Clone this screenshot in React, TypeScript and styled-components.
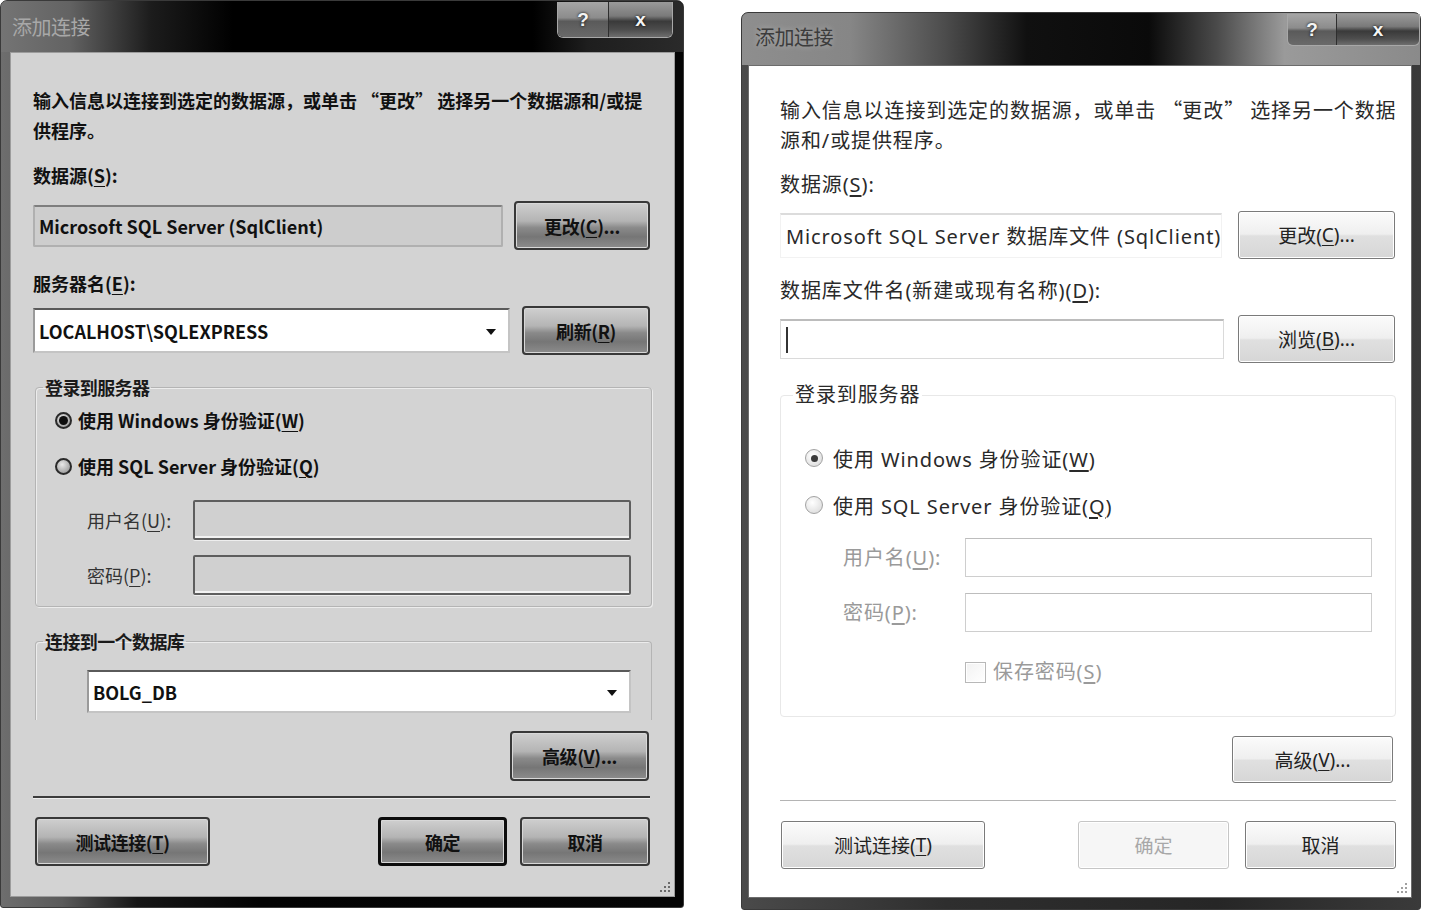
import React from "react";
import styled, { createGlobalStyle, css } from "styled-components";

type Tone = "dark" | "light";

const GlobalStyle = createGlobalStyle`
  html, body {
    margin: 0;
    padding: 0;
    background: #ffffff;
  }
  body {
    font-family: "Noto Sans CJK SC", "Noto Sans", sans-serif;
  }
`;

const darkFont = css`
  font-family: "Noto Sans CJK SC", sans-serif;
  font-weight: 700;
  font-size: 18px;
  letter-spacing: 0;
  color: #111;
`;

const lightFont = css`
  font-family: "Noto Sans", "Noto Sans CJK SC", sans-serif;
  font-weight: 400;
  font-size: 20px;
  letter-spacing: 0.9px;
  color: #2a2a2a;
`;

const Page = styled.div`
  width: 1435px;
  height: 911px;
  display: flex;
  align-items: flex-start;
  gap: 57px;
  overflow: hidden;
`;

const Window = styled.div<{ $tone: Tone }>`
  box-sizing: border-box;
  display: flex;
  flex-direction: column;
  flex: none;
  border: 1px solid #3a3a3a;
  border-radius: 7px 7px 3px 3px;
  ${(p) =>
    p.$tone === "dark"
      ? css`
          width: 684px;
          height: 908px;
          background: linear-gradient(
            90deg,
            #6e6e6e 0%,
            #5a5a5a 9%,
            #161616 20%,
            #030303 38%,
            #050505 100%
          );
        `
      : css`
          width: 680px;
          height: 898px;
          margin-top: 12px;
          background: linear-gradient(90deg, #4a4a4a 0%, #2e2e2e 30%, #262626 70%, #3a3a3a 100%);
        `}
`;

const TitleBar = styled.div<{ $tone: Tone }>`
  display: flex;
  align-items: flex-start;
  justify-content: space-between;
  flex: none;
  border-radius: 6px 6px 0 0;
  ${(p) =>
    p.$tone === "dark"
      ? css`
          height: 51px;
          padding: 0 10px 0 11px;
          background: linear-gradient(
            90deg,
            #747474 0%,
            #636363 10%,
            #1c1c1c 22%,
            #000 34%,
            #000 78%,
            #1e1e1e 86%,
            #2a2a2a 100%
          );
        `
      : css`
          height: 52px;
          padding: 0 0 0 13px;
          background: linear-gradient(
            90deg,
            #8e8e8e 0%,
            #868686 16%,
            #4c4c4c 30%,
            #101010 42%,
            #0a0a0a 60%,
            #4a4a4a 70%,
            #9a9a9a 80%,
            #8a8a8a 100%
          );
        `}
`;

const TitleText = styled.div<{ $tone: Tone }>`
  font-family: "Noto Sans CJK SC", sans-serif;
  font-size: 20px;
  line-height: 26px;
  letter-spacing: -0.5px;
  ${(p) =>
    p.$tone === "dark"
      ? css`
          margin-top: 13px;
          color: #a8a8a8;
        `
      : css`
          margin-top: 11px;
          color: #3c3c3c;
          text-shadow: 0 0 6px rgba(255, 255, 255, 0.35);
        `}
`;

const CaptionGroup = styled.div<{ $tone: Tone }>`
  display: flex;
  margin-top: 1px;
  border: 1px solid #a8a8a8;
  border-top: none;
  border-radius: 0 0 6px 6px;
  overflow: hidden;
  height: ${(p) => (p.$tone === "dark" ? 35 : 31)}px;
`;

const CaptionButton = styled.div<{ $w: number; $close?: boolean }>`
  width: ${(p) => p.$w}px;
  display: flex;
  align-items: center;
  justify-content: center;
  font-family: "Liberation Sans", "DejaVu Sans", sans-serif;
  font-weight: 700;
  font-size: 19px;
  color: #f4f4f4;
  text-shadow: 0 0 3px #000;
  background: ${(p) =>
    p.$close
      ? "linear-gradient(180deg, #9a9a9a 0%, #7a7a7a 40%, #3a3a3a 55%, #4e4e4e 80%, #6e6e6e 100%)"
      : "linear-gradient(180deg, #a6a6a6 0%, #8c8c8c 45%, #5a5a5a 55%, #6a6a6a 100%)"};
  & + & {
    border-left: 1px solid #2e2e2e;
  }
`;

const Client = styled.div<{ $tone: Tone }>`
  position: relative;
  flex: 1;
  display: flex;
  flex-direction: column;
  box-sizing: border-box;
  ${(p) =>
    p.$tone === "dark"
      ? css`
          margin: 0 8px 10px 9px;
          padding: 32px 24px 0 22px;
          background: #d3d3d3;
          border: 1px solid #9c9c9c;
        `
      : css`
          margin: 0 8px 11px 6px;
          padding: 29px 15px 0 31px;
          background: #ffffff;
          border: 1px solid #6c6c6c;
        `}
`;

const Intro = styled.p<{ $tone: Tone }>`
  margin: 0;
  line-height: 30px;
  white-space: nowrap;
  ${(p) => (p.$tone === "dark" ? darkFont : lightFont)}
`;

const CjkQuote = styled.span`
  font-family: "Noto Sans CJK SC", sans-serif;
  letter-spacing: 0;
`;

const Label = styled.div<{ $tone: Tone; $mt?: number; $muted?: boolean }>`
  line-height: 26px;
  white-space: nowrap;
  margin-top: ${(p) => p.$mt ?? 0}px;
  ${(p) => (p.$tone === "dark" ? darkFont : lightFont)}
  ${(p) =>
    p.$muted &&
    css`
      color: #9a9a9a;
    `}
  ${(p) =>
    p.$tone === "dark" &&
    p.$muted &&
    css`
      font-weight: 400;
      color: #333;
    `}
  u {
    text-underline-offset: 3px;
  }
`;

const Row = styled.div<{ $mt: number; $gap: number; $ml?: number }>`
  display: flex;
  align-items: center;
  margin-top: ${(p) => p.$mt}px;
  margin-left: ${(p) => p.$ml ?? 0}px;
  gap: ${(p) => p.$gap}px;
`;

type BoxKind = "readonly" | "combo" | "input" | "disabled";

const TextBox = styled.div<{ $tone: Tone; $kind: BoxKind; $h: number }>`
  box-sizing: border-box;
  flex: 1;
  min-width: 0;
  height: ${(p) => p.$h}px;
  display: flex;
  align-items: center;
  padding: 0 12px 0 4px;
  overflow: hidden;
  white-space: nowrap;
  ${(p) => (p.$tone === "dark" ? darkFont : lightFont)}
  ${(p) => {
    if (p.$tone === "dark") {
      switch (p.$kind) {
        case "readonly":
          return css`
            background: #cdcdcd;
            border: 2px solid #b0b0b0;
            border-top-color: #7e7e7e;
            border-radius: 2px;
          `;
        case "combo":
          return css`
            background: #ffffff;
            border: 2px solid #c4c4c4;
            border-top-color: #5a5a5a;
            border-left-color: #9a9a9a;
          `;
        default:
          return css`
            background: #d0d0d0;
            border: 2px solid #5e5e5e;
            border-radius: 2px;
            box-shadow: inset 0 -2px 0 #f2f2f2, 0 1px 0 #eee;
          `;
      }
    }
    switch (p.$kind) {
      case "readonly":
        return css`
          background: #ffffff;
          border: 1px solid #f2f2f2;
          border-top: 2px solid #dcdcdc;
          padding: 0 0 0 5px;
        `;
      case "input":
        return css`
          background: #ffffff;
          border: 1px solid #dadada;
          border-top: 2px solid #bcbcbc;
          padding-left: 5px;
        `;
      default:
        return css`
          background: #ffffff;
          border: 1px solid #cecece;
          border-top-color: #bdbdbd;
        `;
    }
  }}
`;

const Caret = styled.span`
  width: 2px;
  height: 26px;
  background: #333;
`;

const DropArrow = styled.span`
  margin-left: auto;
  width: 0;
  height: 0;
  border-left: 5px solid transparent;
  border-right: 5px solid transparent;
  border-top: 6px solid #111;
  margin-top: 2px;
`;

const Button = styled.div<{
  $tone: Tone;
  $w: number;
  $h: number;
  $primary?: boolean;
  $disabled?: boolean;
  $ml?: number;
  $mr?: number;
}>`
  box-sizing: border-box;
  flex: none;
  width: ${(p) => p.$w}px;
  height: ${(p) => p.$h}px;
  margin-left: ${(p) => p.$ml ?? 0}px;
  margin-right: ${(p) => p.$mr ?? 0}px;
  display: flex;
  align-items: center;
  justify-content: center;
  white-space: nowrap;
  u {
    text-underline-offset: 3px;
  }
  ${(p) =>
    p.$tone === "dark"
      ? css`
          ${darkFont}
          letter-spacing: -0.4px;
          border: ${p.$primary ? "3px solid #0c0c0c" : "2px solid #383838"};
          border-radius: 4px;
          background: linear-gradient(
            180deg,
            #cfcfcf 0%,
            #b4b4b4 40%,
            #8a8a8a 55%,
            #767676 75%,
            #8c8c8c 100%
          );
          box-shadow: inset 0 0 0 1px #d8d8d8;
        `
      : css`
          ${lightFont}
          font-size: 19px;
          letter-spacing: 0;
          border: 1px solid ${p.$disabled ? "#c6c6c6" : "#7a7a7a"};
          border-radius: 3px;
          color: ${p.$disabled ? "#a8a8a8" : "#222"};
          background: ${p.$disabled
            ? "#f6f6f6"
            : "linear-gradient(180deg, #fbfbfb 0%, #efefef 48%, #e0e0e0 52%, #d6d6d6 100%)"};
          box-shadow: inset 0 0 0 1px #ffffff;
        `}
`;

const Group = styled.fieldset<{ $tone: Tone; $mt: number; $open?: boolean }>`
  margin: ${(p) => p.$mt}px 0 0 0;
  min-inline-size: 0;
  border-radius: 4px;
  ${(p) =>
    p.$tone === "dark"
      ? css`
          margin-left: 2px;
          margin-right: -2px;
          padding: 5px 20px 11px 7px;
          border: 1px solid #b4b4b4;
          box-shadow: 1px 1px 0 #ececec, inset 1px 1px 0 #ececec;
        `
      : css`
          padding: 35px 23px 33px 12px;
          border: 1px solid #e8e8e8;
        `}
  ${(p) =>
    p.$open &&
    css`
      padding-top: 16px;
      padding-bottom: 7px;
      border-bottom: none;
      border-radius: 4px 4px 0 0;
      box-shadow: inset 1px 1px 0 #ececec;
    `}
`;

const GroupBody = styled.div`
  padding-left: 12px;
`;

const Legend = styled.legend<{ $tone: Tone }>`
  line-height: 26px;
  padding: 0 2px;
  margin-left: 0;
  ${(p) => (p.$tone === "dark" ? darkFont : lightFont)}
  ${(p) =>
    p.$tone === "dark" &&
    css`
      letter-spacing: -0.6px;
      color: #1a1a1a;
    `}
`;

const RadioRow = styled.div<{ $tone: Tone; $mt?: number }>`
  display: flex;
  align-items: center;
  height: 30px;
  margin-top: ${(p) => p.$mt ?? 0}px;
  gap: ${(p) => (p.$tone === "dark" ? 6 : 10)}px;
  white-space: nowrap;
  ${(p) => (p.$tone === "dark" ? darkFont : lightFont)}
  u {
    text-underline-offset: 3px;
  }
`;

const Radio = styled.span<{ $tone: Tone; $checked?: boolean }>`
  box-sizing: border-box;
  flex: none;
  border-radius: 50%;
  display: flex;
  align-items: center;
  justify-content: center;
  ${(p) =>
    p.$tone === "dark"
      ? css`
          width: 17px;
          height: 17px;
          border: 2px solid #2a2a2a;
          background: radial-gradient(circle at 40% 35%, #e8e8e8, #8a8a8a);
        `
      : css`
          width: 18px;
          height: 18px;
          border: 1px solid #a2a2a2;
          background: radial-gradient(circle at 40% 35%, #ffffff, #d6d6d6);
        `}
  &::after {
    content: "";
    display: ${(p) => (p.$checked ? "block" : "none")};
    width: ${(p) => (p.$tone === "dark" ? 9 : 7)}px;
    height: ${(p) => (p.$tone === "dark" ? 9 : 7)}px;
    border-radius: 50%;
    background: ${(p) => (p.$tone === "dark" ? "#0e0e0e" : "#3a3a3a")};
  }
`;

const FieldRow = styled.div<{ $mt: number; $indent: number; $label: number; $h: number }>`
  display: flex;
  align-items: center;
  height: ${(p) => p.$h}px;
  margin-top: ${(p) => p.$mt}px;
  margin-left: ${(p) => p.$indent}px;
  & > ${Label} {
    width: ${(p) => p.$label}px;
    flex: none;
  }
`;

const CheckRow = styled.div<{ $mt: number; $indent: number }>`
  display: flex;
  align-items: center;
  gap: 7px;
  height: 22px;
  margin-top: ${(p) => p.$mt}px;
  margin-left: ${(p) => p.$indent}px;
`;

const CheckBox = styled.span`
  box-sizing: border-box;
  width: 21px;
  height: 21px;
  border: 1px solid #b8b8b8;
  background: linear-gradient(135deg, #f2f2f2, #ffffff);
  box-shadow: inset 0 0 0 1px #fff;
`;

const ActionRow = styled.div<{ $mt: number }>`
  display: flex;
  justify-content: flex-end;
  margin-top: ${(p) => p.$mt}px;
`;

const Separator = styled.div<{ $tone: Tone; $mt: number }>`
  margin-top: ${(p) => p.$mt}px;
  ${(p) =>
    p.$tone === "dark"
      ? css`
          height: 2px;
          background: #3c3c3c;
          box-shadow: 0 1px 0 #eeeeee;
        `
      : css`
          height: 1px;
          background: #b4b4b4;
          box-shadow: 0 1px 0 #ffffff;
        `}
`;

const Footer = styled.div<{ $mt: number; $gap: number }>`
  display: flex;
  align-items: center;
  margin-top: ${(p) => p.$mt}px;
  gap: ${(p) => p.$gap}px;
`;

const Spacer = styled.div`
  flex: 1;
`;

const GripWrap = styled.div`
  position: absolute;
  right: 3px;
  bottom: 3px;
  width: 12px;
  height: 12px;
  display: flex;
`;

const Grip: React.FC<{ color: string }> = ({ color }) => (
  <GripWrap>
    <svg width="12" height="12" viewBox="0 0 12 12">
      {[
        [9, 1],
        [9, 5],
        [5, 5],
        [9, 9],
        [5, 9],
        [1, 9],
      ].map(([x, y]) => (
        <rect key={`${x}-${y}`} x={x} y={y} width="2" height="2" fill={color} />
      ))}
    </svg>
  </GripWrap>
);

const TitleRow: React.FC<{ tone: Tone }> = ({ tone }) => (
  <TitleBar $tone={tone}>
    <TitleText $tone={tone}>添加连接</TitleText>
    <CaptionGroup $tone={tone}>
      <CaptionButton $w={tone === "dark" ? 50 : 48}>?</CaptionButton>
      <CaptionButton $w={tone === "dark" ? 63 : 82} $close>
        x
      </CaptionButton>
    </CaptionGroup>
  </TitleBar>
);

const ServerDialog = () => {
  const t: Tone = "dark";
  return (
    <Window $tone={t}>
      <TitleRow tone={t} />
      <Client $tone={t}>
        <Intro $tone={t}>
          输入信息以连接到选定的数据源，或单击 “更改” 选择另一个数据源和/或提
          <br />
          供程序。
        </Intro>
        <Label $tone={t} $mt={17}>
          数据源(<u>S</u>):
        </Label>
        <Row $mt={13} $gap={11}>
          <TextBox $tone={t} $kind="readonly" $h={42}>
            Microsoft SQL Server (SqlClient)
          </TextBox>
          <Button $tone={t} $w={136} $h={49}>
            更改(<u>C</u>)...
          </Button>
        </Row>
        <Label $tone={t} $mt={20}>
          服务器名(<u>E</u>):
        </Label>
        <Row $mt={10} $gap={12}>
          <TextBox $tone={t} $kind="combo" $h={45}>
            LOCALHOST\SQLEXPRESS
            <DropArrow />
          </TextBox>
          <Button $tone={t} $w={128} $h={49}>
            刷新(<u>R</u>)
          </Button>
        </Row>
        <Group $tone={t} $mt={19}>
          <Legend $tone={t}>登录到服务器</Legend>
          <GroupBody>
            <RadioRow $tone={t}>
              <Radio $tone={t} $checked />
              <span>
                使用 Windows 身份验证(<u>W</u>)
              </span>
            </RadioRow>
            <RadioRow $tone={t} $mt={16}>
              <Radio $tone={t} />
              <span>
                使用 SQL Server 身份验证(<u>Q</u>)
              </span>
            </RadioRow>
            <FieldRow $mt={19} $indent={32} $label={106} $h={40}>
              <Label $tone={t} $muted>
                用户名(<u>U</u>):
              </Label>
              <TextBox $tone={t} $kind="disabled" $h={40} />
            </FieldRow>
            <FieldRow $mt={15} $indent={32} $label={106} $h={40}>
              <Label $tone={t} $muted>
                密码(<u>P</u>):
              </Label>
              <TextBox $tone={t} $kind="disabled" $h={40} />
            </FieldRow>
          </GroupBody>
        </Group>
        <Group $tone={t} $mt={21} $open>
          <Legend $tone={t}>连接到一个数据库</Legend>
          <GroupBody>
            <Row $mt={0} $gap={0} $ml={32}>
              <TextBox $tone={t} $kind="combo" $h={43}>
                BOLG_DB
                <DropArrow />
              </TextBox>
            </Row>
          </GroupBody>
        </Group>
        <ActionRow $mt={11}>
          <Button $tone={t} $w={139} $h={50} $mr={1}>
            高级(<u>V</u>)...
          </Button>
        </ActionRow>
        <Separator $tone={t} $mt={15} />
        <Footer $mt={19} $gap={13}>
          <Button $tone={t} $w={175} $h={49} $ml={2}>
            测试连接(<u>T</u>)
          </Button>
          <Spacer />
          <Button $tone={t} $w={129} $h={49} $primary>
            确定
          </Button>
          <Button $tone={t} $w={130} $h={49}>
            取消
          </Button>
        </Footer>
        <Grip color="#6a6a6a" />
      </Client>
    </Window>
  );
};

const FileDialog = () => {
  const t: Tone = "light";
  return (
    <Window $tone={t}>
      <TitleRow tone={t} />
      <Client $tone={t}>
        <Intro $tone={t}>
          输入信息以连接到选定的数据源，或单击 <CjkQuote>“</CjkQuote>更改
          <CjkQuote>”</CjkQuote> 选择另一个数据
          <br />
          源和/或提供程序。
        </Intro>
        <Label $tone={t} $mt={16}>
          数据源(<u>S</u>):
        </Label>
        <Row $mt={13} $gap={16}>
          <TextBox $tone={t} $kind="readonly" $h={45}>
            Microsoft SQL Server 数据库文件 (SqlClient)
          </TextBox>
          <Button $tone={t} $w={157} $h={48} $mr={1}>
            更改(<u>C</u>)...
          </Button>
        </Row>
        <Label $tone={t} $mt={19}>
          数据库文件名(新建或现有名称)(<u>D</u>):
        </Label>
        <Row $mt={11} $gap={14}>
          <TextBox $tone={t} $kind="input" $h={40}>
            <Caret />
          </TextBox>
          <Button $tone={t} $w={157} $h={48} $mr={1}>
            浏览(<u>B</u>)...
          </Button>
        </Row>
        <Group $tone={t} $mt={19}>
          <Legend $tone={t}>登录到服务器</Legend>
          <GroupBody>
            <RadioRow $tone={t}>
              <Radio $tone={t} $checked />
              <span>
                使用 Windows 身份验证(<u>W</u>)
              </span>
            </RadioRow>
            <RadioRow $tone={t} $mt={17}>
              <Radio $tone={t} />
              <span>
                使用 SQL Server 身份验证(<u>Q</u>)
              </span>
            </RadioRow>
            <FieldRow $mt={18} $indent={38} $label={122} $h={39}>
              <Label $tone={t} $muted>
                用户名(<u>U</u>):
              </Label>
              <TextBox $tone={t} $kind="disabled" $h={39} />
            </FieldRow>
            <FieldRow $mt={16} $indent={38} $label={122} $h={39}>
              <Label $tone={t} $muted>
                密码(<u>P</u>):
              </Label>
              <TextBox $tone={t} $kind="disabled" $h={39} />
            </FieldRow>
            <CheckRow $mt={29} $indent={160}>
              <CheckBox />
              <Label $tone={t} $muted>
                保存密码(<u>S</u>)
              </Label>
            </CheckRow>
          </GroupBody>
        </Group>
        <ActionRow $mt={19}>
          <Button $tone={t} $w={161} $h={47} $mr={3}>
            高级(<u>V</u>)...
          </Button>
        </ActionRow>
        <Separator $tone={t} $mt={17} />
        <Footer $mt={20} $gap={16}>
          <Button $tone={t} $w={204} $h={48} $ml={1}>
            测试连接(<u>T</u>)
          </Button>
          <Spacer />
          <Button $tone={t} $w={151} $h={48} $disabled>
            确定
          </Button>
          <Button $tone={t} $w={151} $h={48}>
            取消
          </Button>
        </Footer>
        <Grip color="#a0a0a0" />
      </Client>
    </Window>
  );
};

export default function App() {
  return (
    <>
      <GlobalStyle />
      <Page>
        <ServerDialog />
        <FileDialog />
      </Page>
    </>
  );
}
